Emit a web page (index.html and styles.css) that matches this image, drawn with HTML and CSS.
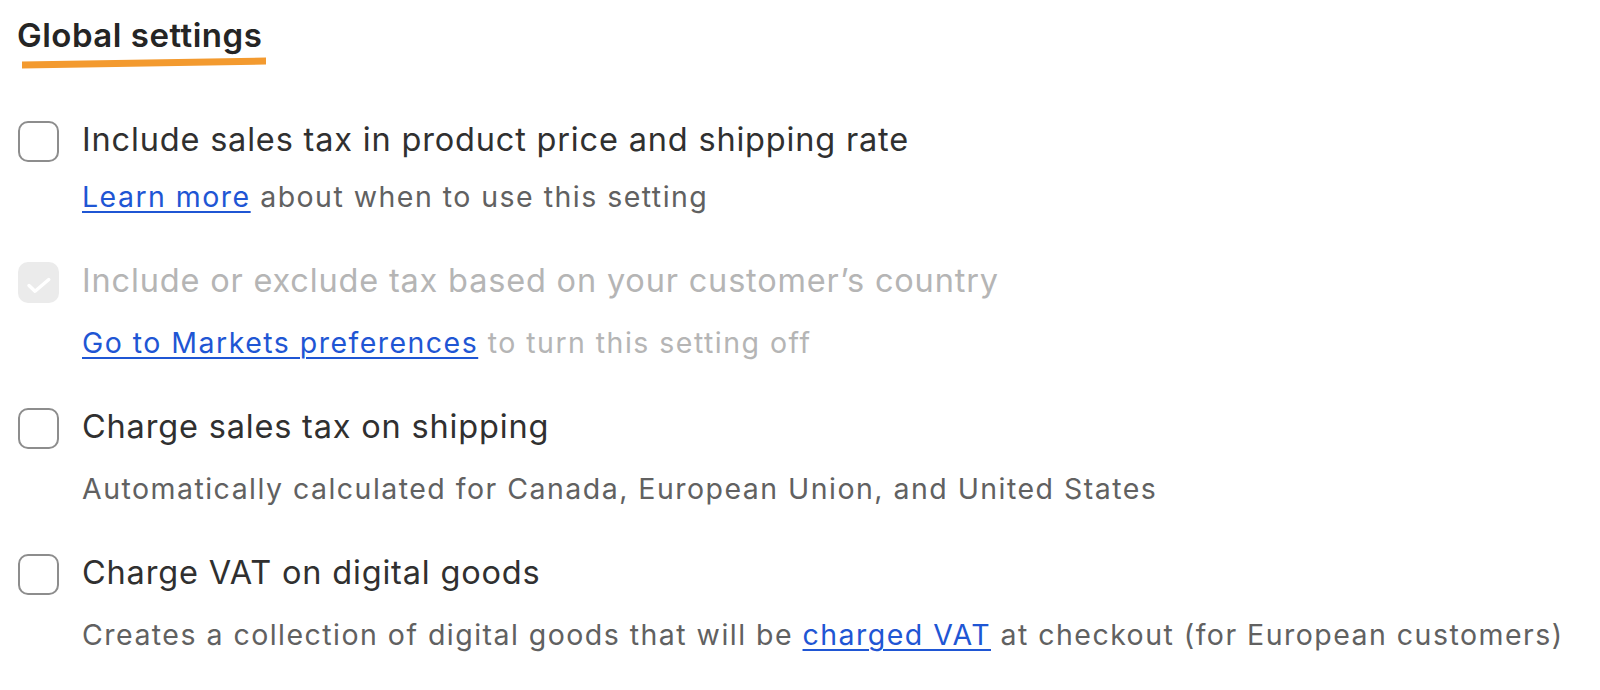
FILE: index.html
```html
<!DOCTYPE html>
<html lang="en">
<head>
<meta charset="utf-8">
<title>Global settings</title>
<link rel="stylesheet" href="styles.css">
</head>
<body>
<section class="panel">
  <header class="head">
    <h2 class="head-title">Global settings</h2>
    <svg class="head-mark" width="246" height="14" viewBox="0 0 246 14" aria-hidden="true">
      <polygon points="0,4.5 244,0.5 244,7.5 0,11.5" fill="#f39a2f"/>
    </svg>
  </header>

  <ul class="options">
    <li class="option option-first">
      <span class="box"></span>
      <div class="text">
        <div class="label">Include sales tax in product price and shipping rate</div>
        <div class="help"><a href="#" class="link">Learn more</a> about when to use this setting</div>
      </div>
    </li>
    <li class="option is-disabled">
      <span class="box box-checked">
        <svg width="41" height="41" viewBox="0 0 41 41" aria-hidden="true"><path d="M11 23.5l6 5.8 13.8-11.8" fill="none" stroke="#fff" stroke-width="3.4" stroke-linecap="round" stroke-linejoin="round"/></svg>
      </span>
      <div class="text">
        <div class="label">Include or exclude tax based on your customer’s country</div>
        <div class="help"><a href="#" class="link">Go to Markets preferences</a> to turn this setting off</div>
      </div>
    </li>
    <li class="option">
      <span class="box"></span>
      <div class="text">
        <div class="label">Charge sales tax on shipping</div>
        <div class="help">Automatically calculated for Canada, European Union, and United States</div>
      </div>
    </li>
    <li class="option">
      <span class="box"></span>
      <div class="text">
        <div class="label">Charge VAT on digital goods</div>
        <div class="help">Creates a collection of digital goods that will be <a href="#" class="link">charged VAT</a> at checkout (for European customers)</div>
      </div>
    </li>
  </ul>
</section>
</body>
</html>
```

FILE: styles.css
```css
* { box-sizing: border-box; }
html, body { margin: 0; padding: 0; background: #fff; }
body {
  font-family: Inter, "Noto Sans", sans-serif;
  color: #303030;
}

.panel { padding: 15px 0 0 17px; }

.head { display: flex; flex-direction: column; align-items: flex-start; }
.head-title {
  margin: 0;
  font-size: 33px;
  line-height: 40px;
  font-weight: 600;
  letter-spacing: 0.5px;
  color: #252525;
}
.head-mark { display: block; margin: 2px 0 0 5px; }

.options { list-style: none; margin: 48px 0 0; padding: 0; display: flex; flex-direction: column; gap: 44px; }
.option { display: flex; align-items: flex-start; gap: 23px; }
.box {
  flex: none;
  width: 41px; height: 41px;
  margin: 2px 0 0 1px;
  border: 2px solid #8d8d8d;
  border-radius: 10px;
  display: flex; align-items: center; justify-content: center;
}
.box-checked { border: none; background: #ebebeb; }

.label { font-size: 32.5px; line-height: 42px; letter-spacing: 0.82px; color: #303030; }
.help { margin-top: 22px; font-size: 28.5px; line-height: 38px; letter-spacing: 1.47px; color: #616161; }
.option-first .help { margin-top: 17px; }

.is-disabled .label, .is-disabled .help { color: #b5b5b5; }

.link { color: #1f56d4; text-decoration: underline; text-underline-offset: 4px; text-decoration-thickness: 2px; }
```
